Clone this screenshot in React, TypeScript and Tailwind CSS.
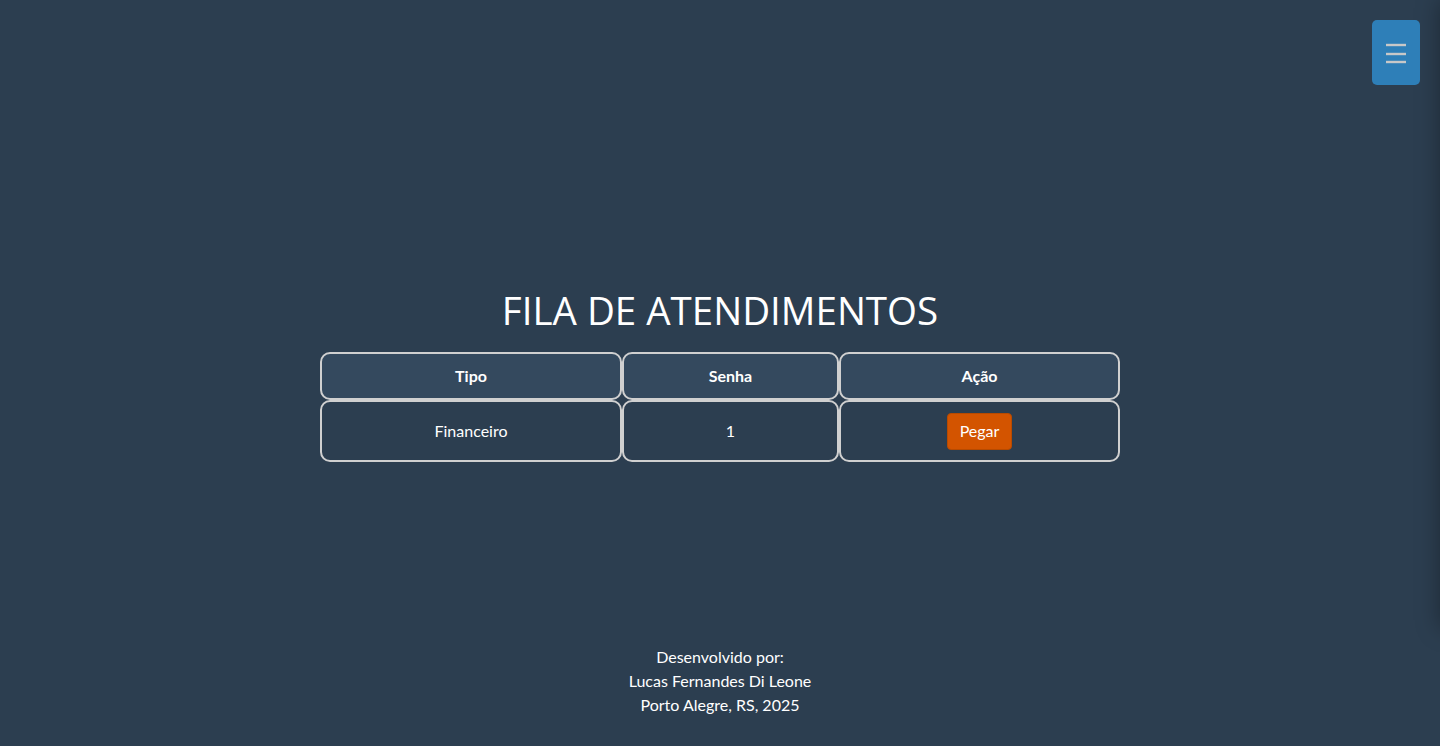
import type { ReactNode } from "react";

const rows = [{ tipo: "Financeiro", senha: "1" }];

function Cell({ children, head, className = "" }: { children: ReactNode; head?: boolean; className?: string }) {
  return (
    <td
      className={`rounded-[10px] border-2 border-[#d0d0d0] text-center ${
        head ? "h-[48px] bg-[#34495e] font-bold" : "h-[62px] bg-[#2c3e50]"
      } ${className}`}
    >
      {children}
    </td>
  );
}

export default function App() {
  return (
    <div
      className="relative flex min-h-screen flex-col overflow-hidden bg-[#2c3e50] text-white"
      style={{ fontFamily: 'Lato, "Open Sans", sans-serif' }}
    >
      {/* menu lateral escondido fora da tela */}
      <div className="absolute top-0 left-full h-[628px] w-[250px] shadow-[0_0_22px_rgba(0,0,0,0.35)]" />

      <button className="absolute top-5 right-5 flex h-[65px] w-[48px] items-center justify-center rounded-[5px] bg-[#2e7fb8]">
        <svg width="22" height="22" viewBox="0 0 22 22">
          <g stroke="#c8c8c8" strokeWidth="2.4">
            <line x1="1" y1="3" x2="21" y2="3" />
            <line x1="1" y1="12" x2="21" y2="12" />
            <line x1="1" y1="20" x2="21" y2="20" />
          </g>
        </svg>
      </button>

      <main className="flex flex-1 flex-col items-center pt-[283px]">
        <h1 className="font-['Open_Sans'] text-[38.5px] leading-[54px] font-normal">FILA DE ATENDIMENTOS</h1>
        <table className="mt-[15px] w-[800px] table-fixed border-separate border-spacing-0 text-base">
          <thead>
            <tr>
              <Cell head className="w-[302px]">Tipo</Cell>
              <Cell head className="w-[217px]">Senha</Cell>
              <Cell head>Ação</Cell>
            </tr>
          </thead>
          <tbody>
            {rows.map((r) => (
              <tr key={r.senha}>
                <Cell>{r.tipo}</Cell>
                <Cell>{r.senha}</Cell>
                <Cell>
                  <button className="h-[37px] rounded-[4px] border border-[#b84a00] bg-[#d35400] px-3 text-base">
                    Pegar
                  </button>
                </Cell>
              </tr>
            ))}
          </tbody>
        </table>
      </main>

      <footer className="pb-[29px] text-center text-base leading-6">
        <p>Desenvolvido por:</p>
        <p>Lucas Fernandes Di Leone</p>
        <p>Porto Alegre, RS, 2025</p>
      </footer>
    </div>
  );
}
